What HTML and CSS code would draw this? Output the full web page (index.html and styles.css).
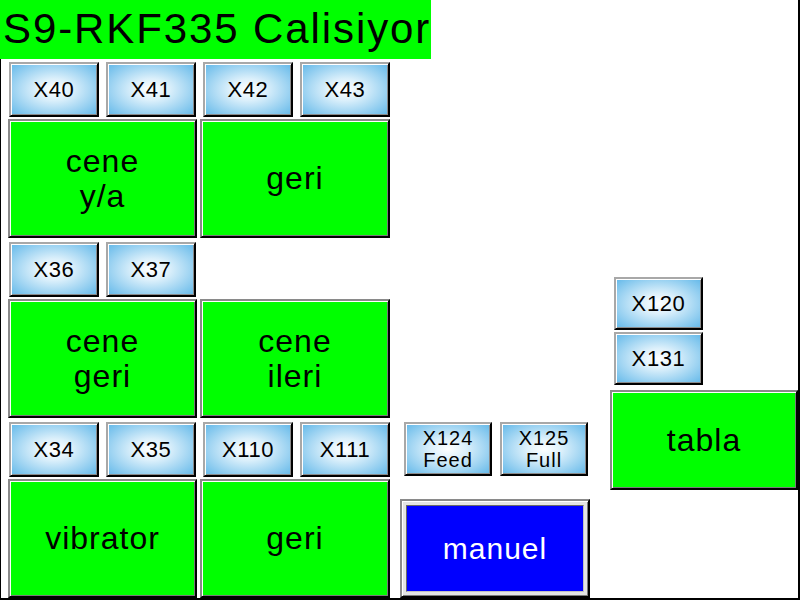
FILE: index.html
```html
<!DOCTYPE html>
<html lang="tr">

<head>
    <meta charset="UTF-8">
    <title>S9-RKF335</title>
    <link rel="stylesheet" href="styles.css">
</head>

<body>
    <div class="screen">
        <div class="title">S9-RKF335 Calisiyor</div>
        <div class="board">
            <div class="left">
                <div class="pads">
                    <div class="pad">X40</div>
                    <div class="pad">X41</div>
                    <div class="pad">X42</div>
                    <div class="pad">X43</div>
                </div>
                <div class="keys">
                    <div class="key">cene<br>y/a</div>
                    <div class="key key-wide">geri</div>
                </div>
                <div class="pads">
                    <div class="pad">X36</div>
                    <div class="pad">X37</div>
                </div>
                <div class="keys">
                    <div class="key">cene<br>geri</div>
                    <div class="key key-wide">cene<br>ileri</div>
                </div>
                <div class="pads">
                    <div class="pad">X34</div>
                    <div class="pad">X35</div>
                    <div class="pad">X110</div>
                    <div class="pad">X111</div>
                </div>
                <div class="keys keys-last">
                    <div class="key">vibrator</div>
                    <div class="key key-wide">geri</div>
                </div>
            </div>

            <div class="mid">
                <div class="pads pads-mid">
                    <div class="pad pad-two">X124<br>Feed</div>
                    <div class="pad pad-two">X125<br>Full</div>
                </div>
                <div class="mode">
                    <div class="mode-face">manuel</div>
                </div>
            </div>

            <div class="right">
                <div class="pad pad-side">X120</div>
                <div class="pad pad-side">X131</div>
                <div class="key key-tabla">tabla</div>
            </div>
        </div>
    </div>
</body>

</html>
```

FILE: styles.css
```css
body,
div {
    margin: 0;
    padding: 0;
}

body {
    background: #fff;
    font-family: "Liberation Sans", Arial, sans-serif;
    color: #000;
}

.screen {
    width: 800px;
    height: 600px;
    box-sizing: border-box;
    border-left: 1px solid #000;
    border-right: 2px solid #000;
    border-bottom: 2px solid #000;
    display: flex;
    flex-direction: column;
}

.title {
    margin-left: -1px;
    width: 431px;
    height: 59px;
    box-sizing: border-box;
    padding-left: 3px;
    background: #00ff00;
    font-size: 42px;
    line-height: 58px;
    letter-spacing: 1.9px;
    white-space: nowrap;
}

.board {
    display: flex;
    margin-top: 3px;
}

/* left block: pads + big keys */
.left {
    margin-left: 7px;
    display: flex;
    flex-direction: column;
}

.pads {
    display: flex;
    gap: 7px;
    height: 55px;
    margin-left: 1px;
    margin-bottom: 2px;
}

.pad {
    width: 90px;
    height: 55px;
    box-sizing: border-box;
    border: 2px solid;
    border-color: #a8a8a8 #000 #000 #a8a8a8;
    box-shadow: inset 1px 1px 0 #fff, inset -1px -1px 0 #8a8a8a;
    background: radial-gradient(ellipse at center, #ffffff 0%, #dcf0fb 30%, #62b8e9 100%);
    display: flex;
    align-items: center;
    justify-content: center;
    text-align: center;
    font-size: 22px;
    letter-spacing: 0.6px;
}

.pad-two {
    width: 88px;
    height: 54px;
    font-size: 20px;
    line-height: 22px;
    letter-spacing: 1px;
}

.keys {
    display: flex;
    gap: 3px;
    height: 119px;
    margin-bottom: 4px;
}

.keys-last {
    margin-bottom: 0;
}

.key {
    width: 189px;
    height: 119px;
    box-sizing: border-box;
    border: 2px solid;
    border-color: #8a8a8a #000 #000 #8a8a8a;
    box-shadow: inset 1px 1px 0 #fff, inset -1px -1px 0 #7a7a7a;
    background: #00ff00;
    display: flex;
    align-items: center;
    justify-content: center;
    text-align: center;
    font-size: 32px;
    line-height: 35px;
    letter-spacing: 1px;
}

.key-wide {
    width: 190px;
}

/* middle: feed pads + mode button */
.mid {
    margin-left: 10px;
    display: flex;
    flex-direction: column;
    justify-content: flex-end;
}

.pads-mid {
    margin-left: 4px;
    gap: 8px;
    margin-bottom: 0;
}

.mode {
    margin-top: 22px;
    width: 190px;
    height: 99px;
    box-sizing: border-box;
    border: 2px solid;
    border-color: #8a8a8a #000 #000 #8a8a8a;
    background: #e4e4e4;
    box-shadow: inset 1px 1px 0 #fff, inset -1px -1px 0 #7a7a7a;
    padding: 4px;
    display: flex;
}

.mode-face {
    flex: 1;
    border: 1px solid;
    border-color: #6a6a6a #c0c0c0 #c0c0c0 #6a6a6a;
    background: #0000ff;
    color: #fff;
    display: flex;
    align-items: center;
    justify-content: center;
    font-size: 30px;
    letter-spacing: 1px;
}

/* right: side pads + tabla */
.right {
    margin-left: 20px;
    padding-top: 215px;
    display: flex;
    flex-direction: column;
}

.pad-side {
    margin-left: 4px;
    width: 89px;
    height: 53px;
    margin-bottom: 2px;
}

.key-tabla {
    margin-top: 3px;
    width: 188px;
    height: 100px;
}
```
